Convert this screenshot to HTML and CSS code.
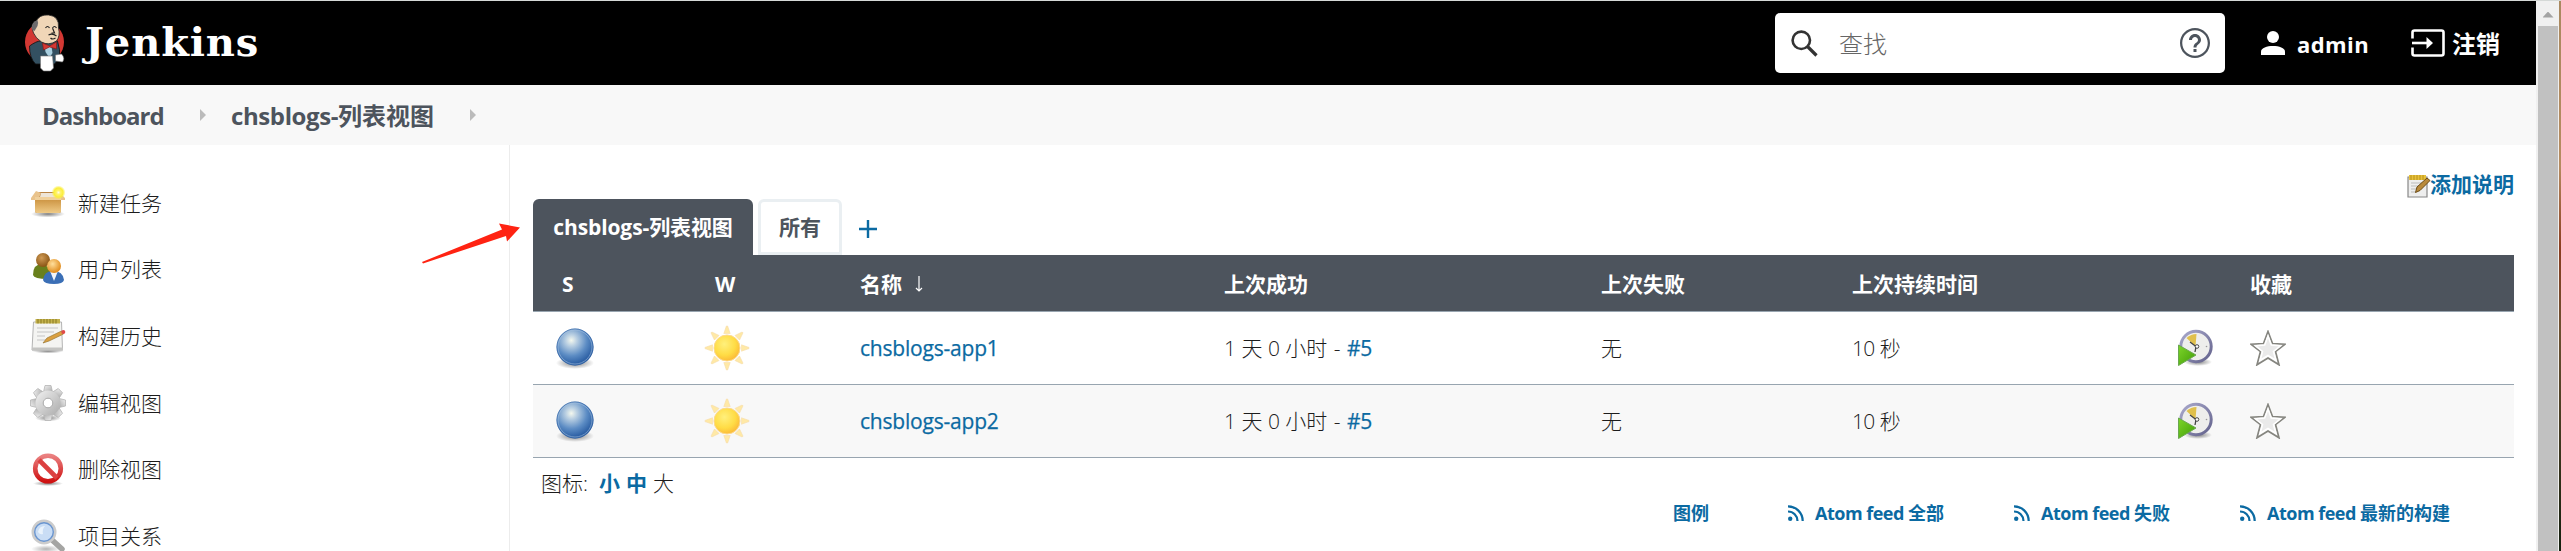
FILE: index.html
```html
<!DOCTYPE html>
<html lang="zh-CN">
<head>
<meta charset="utf-8">
<title>chsblogs-列表视图 [Jenkins]</title>
<link rel="stylesheet" href="styles.css">
</head>
<body>
<svg width="0" height="0" class="defs" aria-hidden="true">
  <defs>
    <radialGradient id="gBall" cx=".4" cy=".32" r=".7"><stop offset="0" stop-color="#f4f8ee"/><stop offset=".22" stop-color="#b9cfe2"/><stop offset=".6" stop-color="#5c8cc4"/><stop offset="1" stop-color="#1f539b"/></radialGradient>
    <radialGradient id="gShade"><stop offset="0" stop-color="#000" stop-opacity=".5"/><stop offset="1" stop-color="#000" stop-opacity="0"/></radialGradient>
    <radialGradient id="gSun" cx=".4" cy=".35" r=".7"><stop offset="0" stop-color="#fff07c"/><stop offset=".6" stop-color="#ffdc45"/><stop offset="1" stop-color="#fbb535"/></radialGradient>
    <linearGradient id="gBox" x2="0" y2="1"><stop offset="0" stop-color="#c98f3c"/><stop offset="1" stop-color="#efca86"/></linearGradient>
    <radialGradient id="gGlow"><stop offset="0" stop-color="#fffde0"/><stop offset=".3" stop-color="#fff36b"/><stop offset=".65" stop-color="#fbee3a"/><stop offset="1" stop-color="#fbee3a" stop-opacity="0"/></radialGradient>
    <radialGradient id="gHeadA" cx=".4" cy=".35" r=".65"><stop offset="0" stop-color="#cf9a55"/><stop offset="1" stop-color="#8a5514"/></radialGradient>
    <radialGradient id="gHeadB" cx=".4" cy=".35" r=".65"><stop offset="0" stop-color="#ffdf9c"/><stop offset="1" stop-color="#e08a1a"/></radialGradient>
    <linearGradient id="gGrey" x2="1" y2="1"><stop offset="0" stop-color="#f2f2f2"/><stop offset="1" stop-color="#aaa"/></linearGradient>
    <linearGradient id="gRed" x2="0" y2="1"><stop offset="0" stop-color="#ea8080"/><stop offset="1" stop-color="#cf1212"/></linearGradient>
    <linearGradient id="gGreen" x2="1" y2="1"><stop offset="0" stop-color="#7ed52a"/><stop offset="1" stop-color="#3f9c06"/></linearGradient>
    <linearGradient id="gClock" x2="1" y2="1"><stop offset="0" stop-color="#a9a9cc"/><stop offset="1" stop-color="#63628c"/></linearGradient>
    <symbol id="ball" viewBox="0 0 40 42"><ellipse cx="20" cy="36" rx="19" ry="6" fill="url(#gShade)"/><circle cx="20" cy="20" r="18.5" fill="url(#gBall)"/><circle cx="20" cy="20" r="18" fill="none" stroke="#3a69a8" stroke-opacity=".7"/><circle cx="20" cy="20" r="17" fill="none" stroke="#a9c4e2" stroke-opacity=".55"/></symbol>
    <symbol id="sun" viewBox="-23 -23 46 46"><g fill="#ffe9a6" stroke="#f6dcaa" stroke-width=".6"><path id="ray" d="M-3.200-14.500L-.6-22H.6L3.200-14.500z"/><use href="#ray" transform="rotate(45)"/><use href="#ray" transform="rotate(90)"/><use href="#ray" transform="rotate(135)"/><use href="#ray" transform="rotate(180)"/><use href="#ray" transform="rotate(225)"/><use href="#ray" transform="rotate(270)"/><use href="#ray" transform="rotate(315)"/></g><circle r="13" fill="url(#gSun)" stroke="#fdd98a"/></symbol>
    <symbol id="build" viewBox="0 0 36 38"><ellipse cx="20" cy="33" rx="14" ry="4" fill="url(#gShade)"/><circle cx="18" cy="17.5" r="15.2" fill="#eeeeec" stroke="url(#gClock)" stroke-width="3"/><path d="M17.500 17.500L8.500 9Q13 5 18.500 5z" fill="#e0c04c"/><path d="M12 13L18 17.500L17 23" fill="none" stroke="#444" stroke-width="1.300"/><circle cx="19" cy="17.500" r="1.800" fill="#fff" stroke="#444"/><circle cx="28.500" cy="17.500" r=".8" fill="#999"/><path d="M.5 16L18 26L.5 36.500z" fill="url(#gGreen)" stroke="#6aa84f"/></symbol>
    <symbol id="star" viewBox="0 0 36 36"><path d="M18 1.500L22.500 13.500L35 14.200L25.500 21.500L29 34.800L18 28L7 34.800L10.500 21.500L1 14.200L13.500 13.500z" fill="#eaeaea" stroke="#85857f" stroke-width="1.700"/><path d="M18 6L21.300 15L30.500 15.800L23.500 21.500L26 30.500L18 25.500L10 30.500L12.500 21.500L5.500 15.800L14.700 15z" fill="none" stroke="#fff" stroke-width="1.600"/></symbol>
    <symbol id="rss" viewBox="0 0 16 16"><circle cx="2.200" cy="13.800" r="2.200" fill="#0b6aa2"/><path d="M0 6.500A9.500 9.500 0 0 1 9.500 16M0 1.300A14.700 14.700 0 0 1 14.700 16" fill="none" stroke="#0b6aa2" stroke-width="2.200"/></symbol>
  </defs>
</svg>
<div class="frame">
<div class="page">
  <header class="topbar">
    <a class="brand">
      <svg class="butler" viewBox="0 0 40 58"><ellipse cx="20" cy="28" rx="19.500" ry="20" fill="#d33833"/><path d="M5 32Q12 27 16 27H33Q36 36 35 44L30 50H11Q5 44 5 32z" fill="#335061" stroke="#111" stroke-width=".8"/><path d="M11 8Q15 0 24 1Q35 2 34 14Q36 22 32 27Q24 32 17 28Q11 24 9 19Q6 12 11 8z" fill="#f0d6b7" stroke="#222" stroke-width=".8"/><path d="M13 6Q7 8 7 14Q8 17 10 17L13 12Q14 8 13 6z" fill="#6d6b6d"/><path d="M21 14Q23 11 25 14M28 14Q30 11 32 14M24 21Q28 19 32 22M26 24Q28 26 31 24M28 14L30 19H27" fill="none" stroke="#222" stroke-width="1.200"/><path d="M20 31L27 32.500L28 39L25 44L21 38z" fill="#a9cfe0"/><path d="M18 29L25 32L32 28L32 35L25 33L19 36z" fill="#d33833" stroke="#811" stroke-width=".6"/><path d="M16 42H28L29 54L26 57H19L16 54z" fill="#fff" stroke="#777" stroke-width=".6"/><path d="M31 41L37 40Q41 44 38 48L31 47z" fill="#fff" stroke="#777" stroke-width=".6"/></svg>
      <span class="brand-name">Jenkins</span>
    </a>
    <div class="search">
      <svg class="i-search" viewBox="0 0 27 27"><circle cx="10.300" cy="10.300" r="8.700" fill="none" stroke="#333" stroke-width="2.600"/><path d="M16.500 16.500L25.500 25.500" stroke="#333" stroke-width="3.200"/></svg>
      <span class="search-text">查找</span>
      <svg class="i-help" viewBox="0 0 24 24" fill="#4d545d"><path d="M11 18h2v-2h-2v2zm1-16C6.480 2 2 6.480 2 12s4.480 10 10 10 10-4.480 10-10S17.520 2 12 2zm0 18.500c-4.700 0-8.500-3.800-8.500-8.500s3.800-8.500 8.500-8.500 8.500 3.800 8.500 8.500-3.800 8.500-8.500 8.500zM12 6c-2.210 0-4 1.790-4 4h2c0-1.100.9-2 2-2s2 .9 2 2c0 2-3 1.750-3 5h2c0-2.250 3-2.500 3-5 0-2.210-1.790-4-4-4z"/></svg>
    </div>
    <a class="user"><svg class="i-user" viewBox="0 0 24 24" fill="#fff"><circle cx="12" cy="6" r="6"/><path d="M0 24V20.500C0 17 6 15 12 15S24 17 24 20.500V24z"/></svg><span class="admin">admin</span></a>
    <a class="logout"><svg class="i-out" viewBox="0 0 34 28"><path d="M1.500 9.500V3.500Q1.500 1.500 3.500 1.500H30.500Q32.500 1.500 32.500 3.500V24.500Q32.500 26.500 30.500 26.500H3.500Q1.500 26.500 1.500 24.500V18.500" fill="none" stroke="#fff" stroke-width="2.600"/><path d="M1 14H17" stroke="#fff" stroke-width="2.600"/><path d="M15.500 8L22 14L15.500 20z" fill="#fff"/></svg><span class="out-text">注销</span></a>
  </header>
  <nav class="crumbs"><span class="crumb-a">Dashboard</span><i class="tri"></i><span class="crumb-b"><span class="lat">chsblogs-</span>列表视图</span><i class="tri"></i></nav>
  <div class="main">
    <aside class="side">
      <a class="task"><svg viewBox="0 0 36 36"><ellipse cx="18" cy="29" rx="17" ry="3.500" fill="url(#gShade)"/><path d="M6 7H28L31 12V26Q31 28 29 28H7Q5 28 5 26V12z" fill="#b98345"/><path d="M11 8H25L26 12H10z" fill="#eee5d8"/><path d="M5 13H31V26Q31 28 29 28H7Q5 28 5 26z" fill="url(#gBox)"/><path d="M6 6L1 13V15H8L11 8zM28 6L35 13V15H28L25 8z" fill="#e9c38c"/><path d="M5 12H31V15H5z" fill="#f0d09b"/><circle cx="28.500" cy="7.500" r="7" fill="url(#gGlow)"/></svg><span>新建任务</span></a>
      <a class="task"><svg viewBox="0 0 36 36"><path d="M3 24Q3 13 12 13Q20 14 21 25L18 28Q4 28 3 24z" fill="#69801c"/><circle cx="13" cy="9" r="7" fill="url(#gHeadA)"/><path d="M13 29Q14 20 23 20Q33 20 34 29Q33 33 24 33Q14 33 13 29z" fill="#3b6fb6"/><path d="M20 20L24 30L28 20z" fill="#f2f5fa"/><circle cx="24" cy="15" r="7" fill="url(#gHeadB)"/></svg><span>用户列表</span></a>
      <a class="task"><svg viewBox="0 0 36 36"><ellipse cx="18" cy="33" rx="16" ry="2.500" fill="url(#gShade)"/><path d="M3.500 4H31.500L32.500 32H2z" fill="#f4f4f2" stroke="#b4b4b4"/><path d="M2 29.500H33V32.500H2z" fill="#c4c4c2"/><path d="M5.500 1H30V5.500H5.500z" fill="#c4b24c"/><path d="M8 1V5.500M11 1V5.500M14 1V5.500M17 1V5.500M20 1V5.500M23 1V5.500M26 1V5.500" stroke="#8a7b22"/><path d="M7 10H28M7 14H24M7 18H15M7 22H16" stroke="#c4c4c4"/><path d="M13 25L17 20L31.500 13L33.500 16L19 23z" fill="#dba040" stroke="#9a7836" stroke-width=".7"/><circle cx="33.300" cy="14" r="2" fill="#e04a4a"/></svg><span>构建历史</span></a>
      <a class="task"><svg viewBox="-18 -18 36 36"><ellipse cy="15" rx="13" ry="3.500" fill="url(#gShade)"/><g fill="url(#gGrey)"><g stroke="#b5b5b5" stroke-width=".8"><path id="cog" d="M-4.500-11L-3-17.500H3L4.500-11z"/><use href="#cog" transform="rotate(45)"/><use href="#cog" transform="rotate(90)"/><use href="#cog" transform="rotate(135)"/><use href="#cog" transform="rotate(180)"/><use href="#cog" transform="rotate(225)"/><use href="#cog" transform="rotate(270)"/><use href="#cog" transform="rotate(315)"/></g><circle r="12.500"/></g><circle r="4.800" fill="#fff" stroke="#aaa"/></svg><span>编辑视图</span></a>
      <a class="task"><svg viewBox="0 0 36 36"><ellipse cx="18" cy="32.500" rx="15" ry="2.500" fill="url(#gShade)"/><circle cx="18" cy="17.500" r="12.800" fill="#fff" stroke="url(#gRed)" stroke-width="4.600"/><path d="M9 9L27 27" stroke="#dc4040" stroke-width="4.600"/></svg><span>删除视图</span></a>
      <a class="task"><svg viewBox="0 0 36 36"><ellipse cx="16" cy="31" rx="15" ry="4" fill="url(#gShade)" opacity=".6"/><path d="M21 21L32 31" stroke="#a5a5a3" stroke-width="5.500" stroke-linecap="round"/><circle cx="14" cy="14" r="11" fill="#bfd6f2" stroke="#ccc" stroke-width="3"/><circle cx="14" cy="14" r="9.300" fill="#c9ddf5" stroke="#6a95cf" stroke-width="1.400"/><path d="M8 14Q9 8 15 8Q12 11 13 16Q10 17 8 14z" fill="#eaf3fc"/></svg><span>项目关系</span></a>
    </aside>
    <section class="content">
      <div class="describe"><svg viewBox="0 0 24 24"><path d="M1 3H20V23H1z" fill="#eee" stroke="#888" stroke-width="1.200"/><path d="M2 1H19V6H2z" fill="#e7c13a"/><path d="M4 1V6M7 1V6M10 1V6M13 1V6M16 1V6" stroke="#b8901c"/><path d="M4 9H15M4 12H12M4 15H9M4 18H9" stroke="#bbb"/><path d="M8.500 18.500L10 13L20 4L23 6.500L13 16.500z" fill="#b98a3c" stroke="#6d4c16"/></svg><span>添加说明</span></div>
      <div class="tabs"><span class="tab on"><span>chsblogs-</span>列表视图</span><span class="tab">所有</span><svg class="plus" viewBox="0 0 18 18"><path d="M9 0V18M0 9H18" stroke="#0b6aa2" stroke-width="2.400"/></svg>
      </div>
      <div class="table">
        <div class="row head"><span class="c-s">S</span><span class="c-w">W</span><span class="c-n">名称<svg class="sort" viewBox="0 0 8 16"><path d="M4 0V14M1 12L4 15L7 12" fill="none" stroke="#fff" stroke-width="1.200"/></svg></span><span class="c-ok">上次成功</span><span class="c-bad">上次失败</span><span class="c-dur">上次持续时间</span><span class="c-b"></span><span>收藏</span></div>
        <div class="row"><span class="c-s"><svg class="i-ball"><use href="#ball"/></svg></span><span class="c-w"><svg class="i-sun"><use href="#sun"/></svg></span><span class="c-n link">chsblogs-app1</span><span class="c-ok">1 天 0 小时 <span class="dash">-</span> <b class="num">#5</b></span><span class="c-bad">无</span><span class="c-dur"><span class="ten">10</span> 秒</span><span class="c-b"><svg class="i-build"><use href="#build"/></svg></span><span><svg class="i-star"><use href="#star"/></svg></span></div>
        <div class="row alt"><span class="c-s"><svg class="i-ball"><use href="#ball"/></svg></span><span class="c-w"><svg class="i-sun"><use href="#sun"/></svg></span><span class="c-n link">chsblogs-app2</span><span class="c-ok">1 天 0 小时 <span class="dash">-</span> <b class="num">#5</b></span><span class="c-bad">无</span><span class="c-dur"><span class="ten">10</span> 秒</span><span class="c-b"><svg class="i-build"><use href="#build"/></svg></span><span><svg class="i-star"><use href="#star"/></svg></span></div>
      </div>
      <div class="sizes"><span class="lbl">图标:</span><b>小</b><b>中</b><span>大</span></div>
      <div class="feeds"><a class="legend">图例</a><a class="feed"><svg><use href="#rss"/></svg><span><span class="atom">Atom feed </span>全部</span></a><a class="feed"><svg><use href="#rss"/></svg><span><span class="atom">Atom feed </span>失败</span></a><a class="feed"><svg><use href="#rss"/></svg><span><span class="atom">Atom feed </span>最新的构建</span></a></div>
    </section>
  </div>
</div>
<div class="scroll"><div class="up"><i></i></div><div class="thumb"></div></div>
<div class="edge"></div>
</div>
<svg class="pointer" viewBox="0 0 100 42"><path d="M2 40L82 7.500L79 1.500L100 5.500L87 19.500L86 14L3 41.500z" fill="#ff2312"/></svg>
</body>
</html>
```
FILE: styles.css
```css
* { box-sizing: border-box; }
body {
  margin: 0;
  height: 551px;
  overflow: hidden;
  background: #fff;
  color: #1c1c1c;
  font: 21px/30px "Open Sans", "Noto Sans CJK SC", sans-serif;
  font-weight: 300;
  white-space: nowrap;
}
svg { display: block; flex: none; }
.defs { position: absolute; }
.frame { display: flex; height: 551px; border-top: 1px solid #d5d9d7; }
.page { width: 2536px; display: flex; flex-direction: column; }

.topbar { height: 84px; flex: none; display: flex; align-items: center; background: #000; color: #fff; font-weight: 700; font-size: 24px; padding-left: 24px; }
.brand { display: flex; align-items: center; width: 1751px; gap: 20px; }
.butler { width: 41px; height: 58px; }
.brand-name { font: 700 40px/50px "DejaVu Serif", serif; letter-spacing: 0.9px; padding-bottom: 3px; }
.search { width: 450px; height: 60px; background: #fff; border-radius: 5px; display: flex; align-items: center; padding: 0 12px 0 16px; color: #666; font-weight: 300; }
.i-search { width: 27px; height: 27px; }
.search-text { flex: 1; padding-left: 21px; padding-top: 1px; }
.i-help { width: 36px; height: 36px; }
.user { display: flex; align-items: center; gap: 12px; width: 186px; padding-left: 36px; }
.i-user { width: 24px; height: 24px; }
.admin { font-size: 22px; padding-top: 1px; letter-spacing: 0.4px; }
.logout { display: flex; align-items: center; gap: 7px; }
.out-text { padding-top: 2px; }
.i-out { width: 34px; height: 28px; }

.crumbs { height: 60px; flex: none; display: flex; align-items: center; background: #f8f8f8; color: #4d545d; font-size: 24px; font-weight: 700; padding-left: 42px; }
.crumb-a { width: 158px; letter-spacing: -1px; padding-top: 2px; }
.crumb-b { width: 239px; padding-top: 2px; }
.crumb-b .lat { letter-spacing: -0.4px; }
.tri { width: 6px; height: 12px; background: #bbb; clip-path: polygon(0 0, 100% 50%, 0 100%); margin-right: 25px; }
.crumb-b + .tri { margin: 0; }

.main { flex: 1; display: flex; min-height: 0; }
.side { width: 510px; border-right: 1px solid #ececec; padding: 24.5px 0 0 30px; overflow: hidden; }
.task { display: flex; align-items: center; height: 66.6px; gap: 12px; }
.task svg { width: 36px; height: 36px; }

.content { width: 2004px; padding: 24px 0 0 23px; }
.describe { height: 30px; display: flex; align-items: center; justify-content: flex-end; color: #0b6aa2; font-weight: 700; }
.describe svg { width: 24px; height: 24px; margin: 3px -1px 0 0; }
.tabs { display: flex; align-items: flex-end; height: 56px; gap: 5px; font-weight: 700; }
.tab { width: 84px; height: 56px; border: 3px solid #eaeff2; border-radius: 6px 6px 0 0; color: #4d545d; display: flex; align-items: center; justify-content: center; }
.tab.on { width: 220px; background: #4d545d; border-color: #4d545d; color: #fff; letter-spacing: -0.1px; }
.plus { width: 18px; height: 18px; margin: 0 0 17px 12px; }
.row { display: flex; align-items: center; height: 73px; border-bottom: 1px solid #98a5b0; }
.row.alt { background: #f8f8f8; }
.row.head { height: 57px; background: #4d545d; color: #fff; font-weight: 700; }
.head > span { padding-top: 2px; }
.c-s { width: 171px; padding-left: 22px; }
.head .c-s { padding-left: 29px; }
.c-w { width: 156px; }
.head .c-w { padding-left: 11px; }
.c-n { width: 364px; display: flex; align-items: center; }
.c-ok { width: 377px; }
.c-bad { width: 251px; }
.c-dur { width: 326px; }
.c-b { width: 72px; }
.ten { letter-spacing: -0.8px; }
.dash { padding: 0 1px 0 1px; }
.sort { width: 8px; height: 16px; margin-left: 13px; }
.i-ball { width: 40px; height: 42px; }
.i-sun { width: 46px; height: 46px; }
.i-build { width: 36px; height: 38px; }
.i-star { width: 36px; height: 36px; }
.link, .num { color: #0b6aa2; font-weight: 500; -webkit-text-stroke: 0.25px #0b6aa2; }
.link { letter-spacing: -0.2px; }
.num { letter-spacing: -0.4px; }
.sizes { display: flex; gap: 6px; padding: 10px 0 0 8px; height: 40px; }
.sizes b { color: #0b6aa2; font-weight: 700; }
.lbl { width: 52px; }
.feeds { display: flex; align-items: center; height: 30px; padding-left: 1140px; color: #0b6aa2; font-size: 18px; font-weight: 700; }
.legend { width: 115px; }
.feed { width: 226px; display: flex; align-items: center; gap: 11px; }
.feed svg { width: 16px; height: 16px; }
.atom { letter-spacing: -0.5px; }

.scroll { width: 23px; background: #f0f0f0; padding: 0 1px 0 2px; }
.up { height: 25px; display: flex; align-items: center; justify-content: center; }
.up i { width: 11px; height: 6px; margin-top: 2px; background: #a3a3a3; clip-path: polygon(50% 0, 100% 100%, 0 100%); }
.thumb { height: 525px; background: #c1c1c1; }
.edge { width: 2px; background: linear-gradient(#a98960, #b58b60 30%, #8a3d20 45%, #6b5030 60%, #14200f); }
.pointer { position: absolute; left: 420px; top: 222px; width: 100px; height: 42px; }
```
